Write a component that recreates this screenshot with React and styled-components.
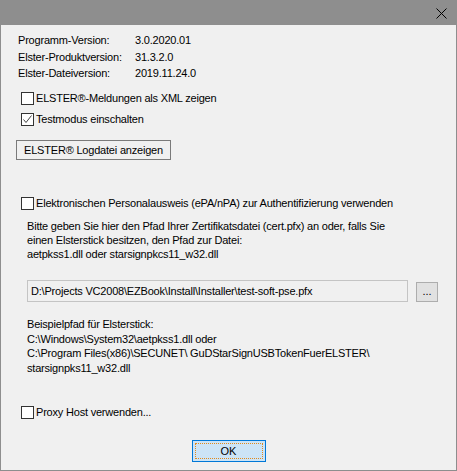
import React from "react";
import styled, { createGlobalStyle } from "styled-components";

const Global = createGlobalStyle`
  html, body { margin: 0; padding: 0; background: #f0f0f0; }
  * { box-sizing: border-box; }
`;

const Window = styled.div`
  width: 457px;
  height: 471px;
  background: #f0f0f0;
  border: 1px solid #8e8e8e;
  border-top: none;
  display: flex;
  flex-direction: column;
  font-family: "Liberation Sans", Arial, sans-serif;
  font-size: 11px;
  letter-spacing: -0.2px;
  color: #000;
`;

const TitleBar = styled.div`
  height: 25px;
  background: #8e8e8e;
  display: flex;
  justify-content: flex-end;
  align-items: center;
  padding-right: 9px;
`;

const CloseIcon = styled.svg`
  width: 11px;
  height: 11px;
  margin-top: 1px;
`;

const Body = styled.div`
  display: flex;
  flex-direction: column;
  padding-left: 15px;
`;

const InfoGrid = styled.div`
  margin-top: 7px;
  margin-left: 2px;
  display: grid;
  grid-template-columns: 117px auto;
  grid-auto-rows: 16.5px;
  line-height: 16.5px;
`;

const CheckGroup = styled.div`
  margin-top: ${(p) => p.$mt}px;
  margin-left: 5px;
  display: flex;
  flex-direction: column;
  gap: 5px;
`;

const CheckRow = styled.label`
  display: flex;
  align-items: flex-start;
  height: 16px;
  line-height: 16px;
  gap: 2px;
`;

const Box = styled.span`
  width: 13px;
  height: 13px;
  margin-top: 2px;
  border: 1px solid #333333;
  background: #ffffff;
  display: flex;
  align-items: center;
  justify-content: center;
`;

const PushButton = styled.div`
  margin-top: ${(p) => p.$mt}px;
  align-self: flex-start;
  width: ${(p) => p.$w}px;
  height: ${(p) => p.$h}px;
  border: 1px solid #7a7a7a;
  background: #f0f0f0;
  display: flex;
  align-items: center;
  justify-content: center;
  line-height: 1;
`;

const Paragraph = styled.div`
  margin-top: ${(p) => p.$mt}px;
  margin-left: 11px;
  line-height: ${(p) => p.$lh}px;
`;

const PathRow = styled.div`
  margin-top: 19px;
  margin-left: 11px;
  display: flex;
  align-items: flex-start;
  gap: 8px;
`;

const PathInput = styled.div`
  width: 381px;
  height: 22px;
  border: 1px solid #c4c4c4;
  background: #f0f0f0;
  padding-left: 3px;
  line-height: 20px;
`;

const BrowseButton = styled.div`
  margin-top: 2px;
  width: 22px;
  height: 20px;
  border: 1px solid #adadad;
  background: #e1e1e1;
  display: flex;
  align-items: flex-end;
  justify-content: center;
  padding-bottom: 4px;
  line-height: 1;
  letter-spacing: 0;
`;

const OkButton = styled.div`
  margin-top: 20px;
  margin-left: -15px;
  align-self: center;
  width: 74px;
  height: 22px;
  border: 1px solid #0078d7;
  background: #cce4f7;
  padding: 2px;
  display: flex;
`;

const FocusRect = styled.div`
  flex: 1;
  border: 1px dotted #e08a1e;
  display: flex;
  align-items: center;
  justify-content: center;
  letter-spacing: 0;
`;

function CheckBox({ checked, children }) {
  return (
    <CheckRow>
      <Box>
        {checked && (
          <svg width="11" height="11" viewBox="0 0 11 11">
            <path d="M1.5 5.5 L4 8.5 L9.5 1.5" fill="none" stroke="#444" strokeWidth="1" />
          </svg>
        )}
      </Box>
      <span>{children}</span>
    </CheckRow>
  );
}

export default function App() {
  return (
    <>
      <Global />
      <Window>
        <TitleBar>
          <CloseIcon viewBox="0 0 11 11">
            <path d="M0.5 0.5 L10.5 10.5 M10.5 0.5 L0.5 10.5" stroke="#000" strokeWidth="1" fill="none" />
          </CloseIcon>
        </TitleBar>
        <Body>
          <InfoGrid>
            <span>Programm-Version:</span>
            <span>3.0.2020.01</span>
            <span>Elster-Produktversion:</span>
            <span>31.3.2.0</span>
            <span>Elster-Dateiversion:</span>
            <span>2019.11.24.0</span>
          </InfoGrid>
          <CheckGroup $mt={8.5}>
            <CheckBox>ELSTER®-Meldungen als XML zeigen</CheckBox>
            <CheckBox checked>Testmodus einschalten</CheckBox>
          </CheckGroup>
          <PushButton $mt={13} $w={155} $h={20}>ELSTER® Logdatei anzeigen</PushButton>
          <CheckGroup $mt={35}>
            <CheckBox>Elektronischen Personalausweis (ePA/nPA) zur Authentifizierung verwenden</CheckBox>
          </CheckGroup>
          <Paragraph $mt={8} $lh={14}>
            Bitte geben Sie hier den Pfad Ihrer Zertifikatsdatei (cert.pfx) an oder, falls Sie
            <br />
            einen Elsterstick besitzen, den Pfad zur Datei:
            <br />
            aetpkss1.dll oder starsignpkcs11_w32.dll
          </Paragraph>
          <PathRow>
            <PathInput>D:\Projects VC2008\EZBook\Install\Installer\test-soft-pse.pfx</PathInput>
            <BrowseButton>...</BrowseButton>
          </PathRow>
          <Paragraph $mt={15} $lh={14.5}>
            Beispielpfad für Elsterstick:
            <br />
            C:\Windows\System32\aetpkss1.dll oder
            <br />
            C:\Program Files(x86)\SECUNET\ GuDStarSignUSBTokenFuerELSTER\
            <br />
            starsignpks11_w32.dll
          </Paragraph>
          <CheckGroup $mt={29}>
            <CheckBox>Proxy Host verwenden...</CheckBox>
          </CheckGroup>
          <OkButton>
            <FocusRect>OK</FocusRect>
          </OkButton>
        </Body>
      </Window>
    </>
  );
}
